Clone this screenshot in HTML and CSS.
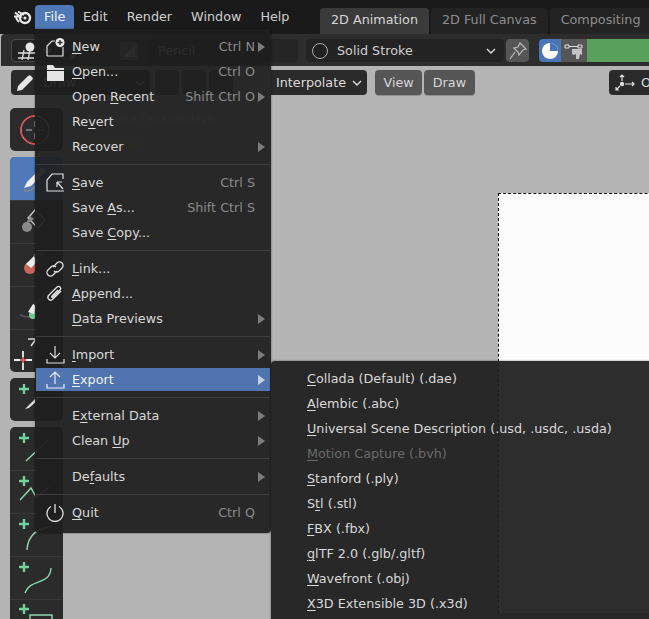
FILE: index.html
```html
<!DOCTYPE html>
<html lang="en">
<head>
<meta charset="utf-8">
<title>Blender File menu</title>
<link rel="stylesheet" href="styles.css">
</head>
<body>
<div class="app">
  <header class="topbar">
    <svg class="logo" viewBox="0 0 20 16" width="20" height="16"><path d="M1 7.500 7 7.500 2 3.500M5 2.500 11 6" fill="none" stroke="#e6e6e6" stroke-width="2"/><circle cx="12" cy="9" r="5" fill="none" stroke="#e6e6e6" stroke-width="2.400"/><circle cx="12" cy="9" r="1.600" fill="#e6e6e6"/><path d="M3 8A9 9 0 0 0 6 13" fill="none" stroke="#e6e6e6" stroke-width="2"/></svg>
    <nav class="mainmenu">
      <span class="mm active">File</span><span class="mm">Edit</span><span class="mm">Render</span><span class="mm">Window</span><span class="mm">Help</span>
    </nav>
    <div class="tabs">
      <span class="tab current">2D Animation</span><span class="tab">2D Full Canvas</span><span class="tab">Compositing</span>
    </div>
  </header>

  <div class="toolbar">
    <div class="widget modebtn"><svg viewBox="0 0 20 18" width="20" height="18"><path d="M1 11H19M1 16H17M7 8 5 18M13 8 11 18" stroke="#ddd" stroke-width="1.300" fill="none"/><circle cx="13" cy="5" r="4.500" fill="#e6e6e6"/></svg><svg class="chev" viewBox="0 0 10 6" width="10" height="6"><path d="M1 1 5 5 9 1" fill="none" stroke="#ddd" stroke-width="1.400"/></svg></div>
    <svg class="ghost-pen" viewBox="0 0 18 22" width="18" height="22"><path d="M2 20 4 15 14 2 17 5 7 18Z" fill="#bbb"/></svg>
    <svg class="ghost-square" viewBox="0 0 18 18" width="18" height="18"><rect width="18" height="18" fill="#888"/><path d="M3 15 15 3V15Z" fill="#ddd"/></svg>
    <div class="widget pencilfield">Pencil</div>
    <div class="widget stroke"><span class="swatch"></span><span class="grow">Solid Stroke</span><svg class="chev" viewBox="0 0 10 6" width="10" height="6"><path d="M1 1 5 5 9 1" fill="none" stroke="#ddd" stroke-width="1.400"/></svg></div>
    <div class="pin"><svg viewBox="0 0 18 18" width="18" height="18"><path d="M11 1 17 7 14 8 10 13 9 10 5 6 9 5ZM6 10 1 17" fill="none" stroke="#bdbdbd" stroke-width="1.200"/></svg></div>
    <div class="overlay"><svg viewBox="0 0 18 18" width="18" height="18"><circle cx="9" cy="9" r="8" fill="#fff"/><path d="M9 9V1A8 8 0 0 1 17 9Z" fill="#4a76b8"/></svg></div>
    <div class="nodes"><svg viewBox="0 0 20 18" width="20" height="18"><path d="M1 3H5V6H1ZM14 3H18V6H14ZM5 4.500H14" fill="none" stroke="#ddd"/><path d="M8 7H18V13L16 12 15 17H12V12L10 13 8 12Z" fill="#c4c4c4"/></svg></div>
    <div class="green"></div>
  </div>

  <div class="toolheader">
    <div class="widget-dark drawmode"><svg viewBox="0 0 18 18" width="18" height="18"><path d="M1 17 2 12 12 2C13 1 14 1 15 2L16 3C17 4 17 5 16 6L6 16Z" fill="#e6e6e6"/></svg><span class="grow">Draw</span><svg class="chev" viewBox="0 0 10 6" width="10" height="6"><path d="M1 1 5 5 9 1" fill="none" stroke="#ddd" stroke-width="1.400"/></svg></div>
    <div class="faint-btns"><span></span><span></span><span></span></div>
    <div class="widget-dark interpolate"><span>Interpolate</span><svg class="chev" viewBox="0 0 10 6" width="10" height="6"><path d="M1 1 5 5 9 1" fill="none" stroke="#ddd" stroke-width="1.400"/></svg></div>
    <span class="plain first">View</span><span class="plain">Draw</span>
    <div class="widget-dark orient"><svg viewBox="0 0 20 18" width="20" height="18"><circle cx="7" cy="10" r="2.200" fill="#ddd"/><path d="M7 7V1M5 3 7 1 9 3M10 10H19M17 8 19 10 17 12M5 12 1 16M1 13V16H4" fill="none" stroke="#ddd" stroke-width="1.200"/></svg><span>O</span></div>
  </div>

  <div class="workspace">
    <aside class="sidebar">
      <div class="toolgroup">
        <div class="tool"><svg viewBox="0 0 53 43" width="53" height="43"><circle cx="25" cy="22" r="14" fill="none" stroke="#e0e0e0" stroke-width="1.200"/><path d="M13.500 30A14 14 0 0 1 25 8M25 36A14 14 0 0 1 14 30" fill="none" stroke="#d84a4a" stroke-width="1.400"/><path d="M16 22H22M28 22H34M25 13V19M25 25V31" stroke="#bbb"/></svg></div>
      </div>
      <div class="toolgroup">
        <div class="tool on"><svg viewBox="0 0 53 43" width="53" height="43"><path d="M14 31 17 25 32 10 36 14 21 29Z" fill="#f0f0f0"/><path d="M14 33Q20 36 26 29" fill="none" stroke="#888" stroke-width="1.400"/><path d="M36 8 33 11" stroke="#666" stroke-width="2"/></svg></div>
        <div class="tool"><svg viewBox="0 0 53 43" width="53" height="43"><path d="M18 18 25 10 35 20 28 28Z" fill="none" stroke="#ccc" stroke-width="1.300"/><circle cx="17" cy="27" r="5" fill="#8a8a8a"/><path d="M15 25 20 16 24 19Z" fill="#8a8a8a"/></svg></div>
        <div class="tool"><svg viewBox="0 0 53 43" width="53" height="43"><circle cx="20" cy="25" r="6" fill="#c8665e"/><path d="M16 21 24 13 28 18 21 25Z" fill="#eee"/><path d="M24 13 35 9" stroke="#666" stroke-width="3"/></svg></div>
        <div class="tool"><svg viewBox="0 0 53 43" width="53" height="43"><path d="M10 29Q20 34 40 27" stroke="#555" stroke-width="1.500" fill="none"/><circle cx="23" cy="29" r="4" fill="#77c99a"/><path d="M18 26 23 18 27 20 24 28Z" fill="#eee"/><path d="M25 18 40 4" stroke="#666" stroke-width="2"/></svg></div>
        <div class="tool"><svg viewBox="0 0 53 43" width="53" height="43"><path d="M13 22V41M4 31H22" stroke="#eee" stroke-width="1.800"/><path d="M10 31H16M13 28V34" stroke="#d85a5a" stroke-width="1.800"/><path d="M18 10H26M26 10 21 17" fill="none" stroke="#ddd" stroke-width="1.500"/></svg></div>
      </div>
      <div class="toolgroup">
        <div class="tool"><svg viewBox="0 0 53 43" width="53" height="43"><path d="M14 6V16M9 11H19" stroke="#6fd39b" stroke-width="2.400"/><path d="M15 31 25 21 27 19 28 22 19 30Z" fill="#ddd"/></svg></div>
      </div>
      <div class="toolgroup">
        <div class="tool"><svg viewBox="0 0 53 43" width="53" height="43"><path d="M14 6V16M9 11H19" stroke="#6fd39b" stroke-width="2.400"/><path d="M16 34 38 13" stroke="#8fd8b2" stroke-width="1.400"/></svg></div>
        <div class="tool"><svg viewBox="0 0 53 43" width="53" height="43"><path d="M14 6V16M9 11H19" stroke="#6fd39b" stroke-width="2.400"/><path d="M10 30 21 18 26 27 39 17" fill="none" stroke="#8fd8b2" stroke-width="1.400"/></svg></div>
        <div class="tool"><svg viewBox="0 0 53 43" width="53" height="43"><path d="M14 6V16M9 11H19" stroke="#6fd39b" stroke-width="2.400"/><path d="M17 37Q18 16 42 14" fill="none" stroke="#8fd8b2" stroke-width="1.400"/></svg></div>
        <div class="tool"><svg viewBox="0 0 53 43" width="53" height="43"><path d="M14 6V16M9 11H19" stroke="#6fd39b" stroke-width="2.400"/><path d="M15 37C20 22 40 30 41 12" fill="none" stroke="#8fd8b2" stroke-width="1.400"/></svg></div>
        <div class="tool"><svg viewBox="0 0 53 43" width="53" height="43"><path d="M14 5V15M9 10H19" stroke="#6fd39b" stroke-width="2.400"/><path d="M20 16H42V30H20Z" fill="none" stroke="#8fd8b2" stroke-width="1.400"/></svg></div>
      </div>
    </aside>
    <main class="viewport">
      <p class="vp-title">Camera Perspective</p>
      <p class="vp-sub">(0) Pose</p>
      <div class="sheet"></div>
    </main>
  </div>

  <div class="menu filemenu">
    <div class="row"><span class="ic"><svg viewBox="0 0 20 20" width="20" height="20"><path d="M2 19V9L7 4H10M18 10V19H2" fill="none" stroke="#e0e0e0" stroke-width="1.200"/><circle cx="15" cy="5.500" r="4.500" fill="#eee"/><path d="M15 3V8M12.500 5.500H17.500" stroke="#282828" stroke-width="1.300"/></svg></span><span class="lb"><u>N</u>ew</span><span class="sc">Ctrl N</span><span class="ar"></span></div>
    <div class="row"><span class="ic"><svg viewBox="0 0 20 20" width="20" height="20"><path d="M2 3H8L10 6H19V8H2ZM2 9H19V19H2Z" fill="#e4e4e4"/></svg></span><span class="lb"><u>O</u>pen...</span><span class="sc">Ctrl O</span><span class="ar none"></span></div>
    <div class="row"><span class="ic"></span><span class="lb">Open <u>R</u>ecent</span><span class="sc">Shift Ctrl O</span><span class="ar"></span></div>
    <div class="row"><span class="ic"></span><span class="lb">Re<u>v</u>ert</span><span class="sc"></span><span class="ar none"></span></div>
    <div class="row"><span class="ic"></span><span class="lb">Recover</span><span class="sc"></span><span class="ar"></span></div>
    <div class="sep"></div>
    <div class="row"><span class="ic"><svg viewBox="0 0 20 20" width="20" height="20"><path d="M19 18H2V7L7 1H18V6M12 9 18 16M12 9V14M12 9H17" fill="none" stroke="#e0e0e0" stroke-width="1.200"/></svg></span><span class="lb"><u>S</u>ave</span><span class="sc">Ctrl S</span><span class="ar none"></span></div>
    <div class="row"><span class="ic"></span><span class="lb">Save <u>A</u>s...</span><span class="sc">Shift Ctrl S</span><span class="ar none"></span></div>
    <div class="row"><span class="ic"></span><span class="lb">Save <u>C</u>opy...</span><span class="sc"></span><span class="ar none"></span></div>
    <div class="sep"></div>
    <div class="row"><span class="ic"><svg viewBox="0 0 20 20" width="20" height="20"><path d="M8 8 12 4A3.500 3.500 0 0 1 17 9L14 12A3.500 3.500 0 0 1 9 12M12 12 8 16A3.500 3.500 0 0 1 3 11L6 8A3.500 3.500 0 0 1 11 8" fill="none" stroke="#e0e0e0" stroke-width="1.300"/></svg></span><span class="lb"><u>L</u>ink...</span><span class="sc"></span><span class="ar none"></span></div>
    <div class="row"><span class="ic"><svg viewBox="0 0 20 20" width="20" height="20"><path d="M16 7 8 15C5 18 1 14 4 11L12 3C14 1 17 4 15 6L8 13C7 14 6 13 7 12L13 6" fill="none" stroke="#e0e0e0" stroke-width="1.300"/></svg></span><span class="lb"><u>A</u>ppend...</span><span class="sc"></span><span class="ar none"></span></div>
    <div class="row"><span class="ic"></span><span class="lb"><u>D</u>ata Previews</span><span class="sc"></span><span class="ar"></span></div>
    <div class="sep"></div>
    <div class="row"><span class="ic"><svg viewBox="0 0 20 20" width="20" height="20"><path d="M10 1V13M5 8 10 13 15 8M2 14V18H19V14" fill="none" stroke="#e0e0e0" stroke-width="1.200"/></svg></span><span class="lb"><u>I</u>mport</span><span class="sc"></span><span class="ar"></span></div>
    <div class="row hot"><span class="ic"><svg viewBox="0 0 20 20" width="20" height="20"><path d="M10 14V2M5 7 10 2 15 7M2 14V18H19V14" fill="none" stroke="#e8eef8" stroke-width="1.200"/></svg></span><span class="lb"><u>E</u>xport</span><span class="sc"></span><span class="ar"></span></div>
    <div class="sep"></div>
    <div class="row"><span class="ic"></span><span class="lb">E<u>x</u>ternal Data</span><span class="sc"></span><span class="ar"></span></div>
    <div class="row"><span class="ic"></span><span class="lb">Clean <u>U</u>p</span><span class="sc"></span><span class="ar"></span></div>
    <div class="sep"></div>
    <div class="row"><span class="ic"></span><span class="lb">De<u>f</u>aults</span><span class="sc"></span><span class="ar"></span></div>
    <div class="sep"></div>
    <div class="row"><span class="ic"><svg viewBox="0 0 20 20" width="20" height="20"><path d="M10 1V10M6 3.500A8 8 0 1 0 14 3.500" fill="none" stroke="#e0e0e0" stroke-width="1.300"/></svg></span><span class="lb"><u>Q</u>uit</span><span class="sc">Ctrl Q</span><span class="ar none"></span></div>
  </div>

  <div class="menu exportmenu">
    <div class="subrow"><u>C</u>ollada (Default) (.dae)</div>
    <div class="subrow"><u>A</u>lembic (.abc)</div>
    <div class="subrow"><u>U</u>niversal Scene Description (.usd, .usdc, .usda)</div>
    <div class="subrow off"><u>M</u>otion Capture (.bvh)</div>
    <div class="subrow"><u>S</u>tanford (.ply)</div>
    <div class="subrow">S<u>t</u>l (.stl)</div>
    <div class="subrow"><u>F</u>BX (.fbx)</div>
    <div class="subrow"><u>g</u>lTF 2.0 (.glb/.gltf)</div>
    <div class="subrow"><u>W</u>avefront (.obj)</div>
    <div class="subrow"><u>X</u>3D Extensible 3D (.x3d)</div>
  </div>
</div>
</body>
</html>
```
FILE: styles.css
```css
* { box-sizing: border-box; }
html, body { margin: 0; padding: 0; }
body { background: #b4b4b4; font-family: "DejaVu Sans", sans-serif; font-size: 12.750px; color: #d9d9d9; }
svg { display: block; flex: none; }
p { margin: 0; }
u { text-underline-offset: 2px; text-decoration-thickness: 1px; }

.app { position: relative; width: 649px; height: 619px; overflow: hidden; display: flex; flex-direction: column; background: #b4b4b4; padding-left: 1px; }

.topbar { height: 34px; flex: none; margin-left: -1px; background: #1a1a1a; display: flex; align-items: flex-start; padding: 5px 0 0 13px; overflow: hidden; }
.logo { margin: 4px 2px 0 0; }
.mainmenu { display: flex; width: 285px; flex: none; }
.mm { height: 24px; line-height: 24px; padding: 0 10px 0 9px; border-radius: 4px 4px 0 0; color: #cfcfcf; white-space: nowrap; }
.mm.active { background: #4f78b8; color: #f2f2f2; width: 39px; padding: 0 0 0 9px; }
.tabs { display: flex; gap: 2px; padding-top: 3px; flex: none; }
.tab { height: 26px; line-height: 24px; padding: 0 11px; border-radius: 4px 4px 0 0; background: #232323; color: #8e8e8e; white-space: nowrap; }
.tab.current { background: #3a3a3a; color: #d6d6d6; }

.toolbar { height: 32px; flex: none; background: #2d2d2d; border-radius: 4px 0 0 0; display: flex; align-items: center; padding: 1px 0 0 10px; }
.widget { height: 23px; border-radius: 4px; background: #232323; color: #ddd; display: flex; align-items: center; flex: none; }
.modebtn { width: 45px; padding-left: 5px; gap: 5px; border: 1px solid #484848; }
.ghost-pen { margin-left: 11px; }
.ghost-square { margin-left: 35px; }
.pencilfield { width: 150px; margin-left: 10px; padding-left: 10px; background: #252525; }
.stroke { width: 198px; margin-left: 8px; padding: 0 8px 0 6px; color: #d0d0d0; }
.swatch { width: 16px; height: 16px; border-radius: 50%; border: 1.500px solid #aaa; background: #202020; margin-right: 9px; }
.grow { flex: 1; }
.pin { width: 23px; height: 23px; margin-left: 2px; border-radius: 4px; background: #565656; display: flex; align-items: center; justify-content: center; }
.overlay { width: 22px; height: 23px; margin-left: 10px; background: #4a76b8; border-radius: 4px 0 0 4px; display: flex; align-items: center; justify-content: center; }
.nodes { width: 26px; height: 23px; background: #565656; display: flex; align-items: center; justify-content: center; }
.green { flex: 1; height: 23px; background: #58a05c; }

.toolheader { height: 34px; flex: none; display: flex; align-items: flex-start; padding: 4px 0 0 10px; }
.widget-dark { height: 25px; background: #2a2a2a; border-radius: 4px; display: flex; align-items: center; color: #dcdcdc; gap: 6px; white-space: nowrap; }
.drawmode { width: 139px; padding: 0 5px; gap: 9px; }
.faint-btns { display: flex; gap: 3px; margin-left: 5px; }
.faint-btns span { width: 24px; height: 25px; background: #4e4e4e; border-radius: 4px; }
.interpolate { width: 96px; margin-left: 38px; padding: 0 5px; border-radius: 0 4px 4px 0; justify-content: space-between; gap: 0; }
.plain { height: 25px; line-height: 25px; padding: 0 8.500px; background: #565656; border-radius: 4px; color: #d6d6d6; margin-left: 2px; box-shadow: 0 1px 0 #8f8f8f; }
.plain.first { margin-left: 8px; }
.orient { margin-left: auto; width: 40px; padding-left: 6px; border-radius: 4px 0 0 4px; }

.workspace { flex: 1; display: flex; min-height: 0; }
.sidebar { width: 53px; margin-left: 9px; margin-top: 8px; display: flex; flex-direction: column; gap: 6px; flex: none; }
.toolgroup { background: #2b2b2b; border-radius: 5px; overflow: hidden; flex: none; }
.toolgroup .tool + .tool { box-shadow: inset 0 1px 0 #383838; }
.tool { height: 43px; }
.tool.on { background: #4f78b8; }
.viewport { flex: 1; position: relative; padding: 6px 0 0 24px; }
.vp-title { color: #e8e8e8; height: 25px; line-height: 25px; white-space: nowrap; }
.vp-sub { color: #c9d84a; line-height: 25px; }
.sheet { position: absolute; left: 435px; top: 93px; width: 200px; height: 420px; background: #fcfcfc; border: 1px dashed #111; border-right: 0; border-bottom: 0; }

.menu { position: absolute; background: rgba(30,30,30,0.935); border-radius: 4px; box-shadow: 0 0 2px rgba(0,0,0,.6); }
.filemenu { left: 35px; top: 29px; width: 236px; height: 504px; padding: 5px 1px 0; border-radius: 0 0 4px 4px; }
.exportmenu { left: 271px; top: 361px; width: 390px; height: 270px; padding-top: 5px; }
.row { height: 25px; display: flex; align-items: center; padding-right: 5px; white-space: nowrap; }
.row.hot { height: 23px; margin: 1px 0; background: #5074b0; color: #f2f2f2; }
.ic { width: 36px; padding-left: 9px; flex: none; }
.lb { flex: 1; }
.sc { color: #8a8a8a; }
.ar { width: 10px; height: 10px; flex: none; position: relative; }
.ar::after { content: ""; position: absolute; right: 0; top: 0; border-left: 7px solid #7c7c7c; border-top: 5px solid transparent; border-bottom: 5px solid transparent; }
.ar.none::after { display: none; }
.hot .ar::after { border-left-color: #c4d2e8; }
.sep { height: 11px; display: flex; align-items: center; }
.sep::before { content: ""; flex: 1; height: 1px; background: #3d3d3d; }
.subrow { height: 25px; line-height: 25px; padding-left: 36px; white-space: nowrap; }
.subrow.off { color: #6b6b6b; }
```
